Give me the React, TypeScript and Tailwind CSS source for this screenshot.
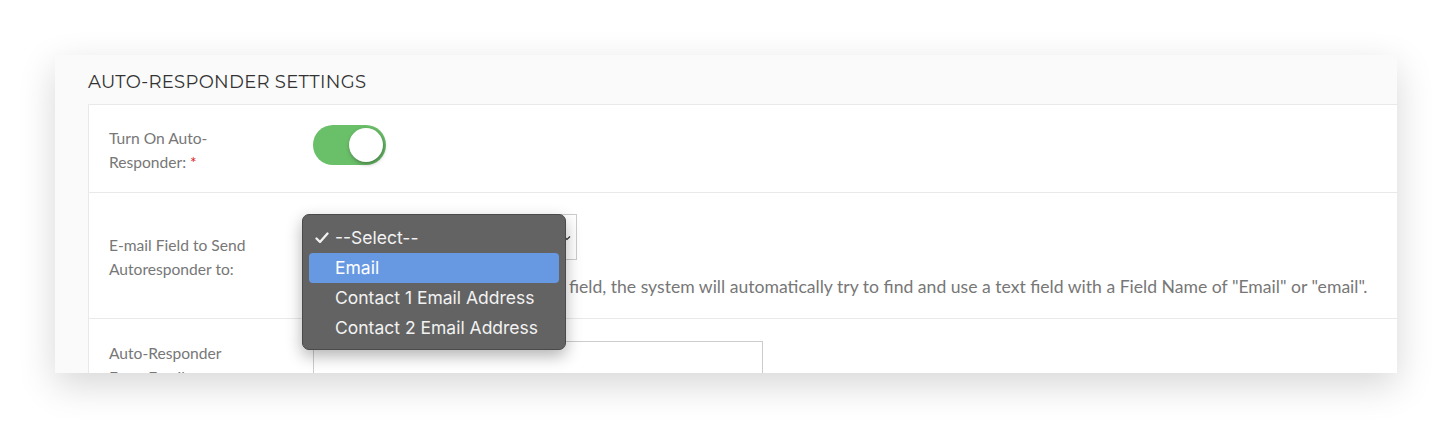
import React from "react";

const labelFont = { fontFamily: '"Source Sans Pro", Lato, "Open Sans", sans-serif' };

export default function App() {
  return (
    <div className="w-[1450px] h-[434px] bg-white overflow-hidden pt-[55px] pl-[55px]">
      <div className="w-[1342px] h-[318px] bg-[#fafafa] overflow-hidden shadow-[0_12px_35px_rgba(0,0,0,0.16)]">
        <div
          className="h-[49px] pl-[33px] pt-[16px] text-[18px] leading-[22px] text-[#333] tracking-[0.3px]"
          style={{ fontFamily: 'Montserrat, "DejaVu Sans", sans-serif' }}
        >
          AUTO-RESPONDER SETTINGS
        </div>
        <div className="ml-[33px] mr-[-20px] bg-white border-l border-t border-[#e9e9e9]" style={labelFont}>
          {/* Row 1 */}
          <div className="flex h-[88px] border-b border-[#e9e9e9]">
            <div className="w-[224px] pl-[20px] flex items-center text-[15.6px] leading-[24px] text-[#777] pt-[3px]">
              <div>
                Turn On Auto-
                <br />
                Responder: <span className="text-[#e02020]">*</span>
              </div>
            </div>
            <div className="pt-[20px]">
              <div className="relative w-[73px] h-[40px] rounded-full bg-[#6abf69]">
                <div className="absolute right-[3px] top-[3px] w-[34px] h-[34px] rounded-full bg-white shadow-[1px_2px_4px_rgba(0,0,0,0.35)]" />
              </div>
            </div>
          </div>
          {/* Row 2 */}
          <div className="flex h-[126px] border-b border-[#e9e9e9]">
            <div className="w-[224px] pl-[20px] flex items-center text-[15.6px] leading-[24px] text-[#777] pt-[3px]">
              <div>
                E-mail Field to Send
                <br />
                Autoresponder to:
              </div>
            </div>
            <div className="pt-[21px] flex-1 relative">
              <div className="relative w-[264px] h-[46px] border border-[#cccccc] bg-white">
                <svg className="absolute right-[5px] top-[19px]" width="8" height="8" viewBox="0 0 8 8">
                  <path d="M1 2.5 L4 5.5 L7 2.5" stroke="#333" strokeWidth="1.2" fill="none" />
                </svg>
              </div>
              <div className="mt-[15px] text-[17.6px] leading-[24px] text-[#777] whitespace-nowrap">
                If no e-mail field is chosen in this field, the system will automatically try to find and use a text field with a Field Name of "Email" or "email".
              </div>
              {/* Dropdown menu */}
              <div
                className="absolute left-[-11px] top-[21px] w-[264px] h-[136px] rounded-[7px] bg-[#636363] border border-[#4a4a4a] shadow-[0_6px_16px_rgba(0,0,0,0.3)] px-[6px] pt-[8px]"
                style={{ fontFamily: 'Inter, "Liberation Sans", sans-serif' }}
              >
                <div className="h-[30px] flex items-center text-[17.5px] text-[#f2f2f2]">
                  <span className="w-[26px] pl-[6px] flex items-center">
                    <svg width="14" height="12" viewBox="0 0 14 12">
                      <path d="M1.5 6.5 L5 10 L12.5 1.5" stroke="#f2f2f2" strokeWidth="2.3" fill="none" strokeLinecap="round" strokeLinejoin="round" />
                    </svg>
                  </span>
                  <span>--Select--</span>
                </div>
                <div className="h-[30px] flex items-center text-[17.5px] text-white bg-[#6799e2] rounded-[4px]">
                  <span className="w-[26px]" />
                  <span>Email</span>
                </div>
                <div className="h-[30px] flex items-center text-[17.5px] text-[#f2f2f2]">
                  <span className="w-[26px]" />
                  <span>Contact 1 Email Address</span>
                </div>
                <div className="h-[30px] flex items-center text-[17.5px] text-[#f2f2f2]">
                  <span className="w-[26px]" />
                  <span>Contact 2 Email Address</span>
                </div>
              </div>
            </div>
          </div>
          {/* Row 3 */}
          <div className="flex h-[120px]">
            <div className="w-[224px] pl-[20px] pt-[22px] text-[15.6px] leading-[24px] text-[#777]">
              Auto-Responder
              <br />
              From Email:
            </div>
            <div className="pt-[22px]">
              <div className="w-[450px] h-[40px] border border-[#cccccc] bg-white" />
            </div>
          </div>
        </div>
      </div>
    </div>
  );
}
